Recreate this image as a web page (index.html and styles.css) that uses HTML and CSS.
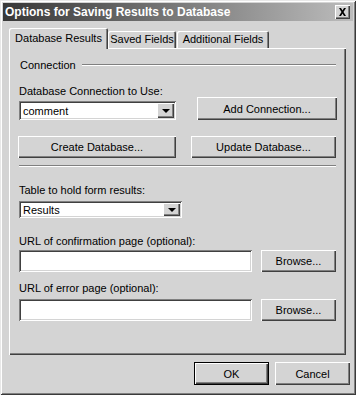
FILE: index.html
```html
<!DOCTYPE html>
<html lang="en">
<head>
  <meta charset="UTF-8">
  <title>Options for Saving Results to Database</title>
  <meta name="viewport" content="width=device-width, initial-scale=1.0">
  <link rel="stylesheet" href="styles.css">
</head>
<body>
  <div class="window">
    <div class="titlebar">
      <span class="title">Options for Saving Results to Database</span>
      <span class="close">
        <svg width="9" height="8" viewBox="0 0 9 8">
          <path d="M1 0h2l1.5 2.5L6 0h2L5.5 4 8 8H6L4.5 5.5 3 8H1l2.5-4z" fill="#000"/>
        </svg>
      </span>
    </div>

    <div class="tabs">
      <div class="tab active">Database Results</div>
      <div class="tab tab-saved">Saved Fields</div>
      <div class="tab tab-extra">Additional Fields</div>
    </div>

    <div class="panel">
      <div class="group-head">
        <span>Connection</span>
        <span class="rule"></span>
      </div>

      <div class="label l-conn">Database Connection to Use:</div>
      <div class="row row-conn">
        <div class="combo combo-conn">
          <span class="value">comment</span>
          <span class="drop"><i></i></span>
        </div>
        <button class="btn btn-add">Add Connection...</button>
      </div>

      <div class="row row-db">
        <button class="btn btn-create">Create Database...</button>
        <button class="btn btn-update">Update Database...</button>
      </div>

      <div class="separator"></div>

      <div class="label l-table">Table to hold form results:</div>
      <div class="combo combo-table">
        <span class="value">Results</span>
        <span class="drop"><i></i></span>
      </div>

      <div class="label l-url">URL of confirmation page (optional):</div>
      <div class="row row-url">
        <div class="field"></div>
        <button class="btn btn-browse">Browse...</button>
      </div>

      <div class="label l-err">URL of error page (optional):</div>
      <div class="row row-err">
        <div class="field"></div>
        <button class="btn btn-browse">Browse...</button>
      </div>
    </div>

    <div class="footer">
      <button class="btn btn-default">OK</button>
      <button class="btn">Cancel</button>
    </div>
  </div>
</body>
</html>
```

FILE: styles.css
```css
* {
  box-sizing: border-box;
}
html, body {
  margin: 0;
  padding: 0;
}
body {
  width: 356px;
  height: 395px;
  background: #d4d4d4;
  font-family: 'Liberation Sans', Arial, sans-serif;
  font-size: 11px;
  color: #000;
}
.window {
  width: 356px;
  height: 395px;
  padding: 3px;
  background: #d4d4d4;
  box-shadow: inset 1px 1px #e8e8e8, inset -1px -1px #3a3a3a, inset 2px 2px #fff, inset -2px -2px #808080;
}
.titlebar {
  height: 18px;
  display: flex;
  align-items: center;
  justify-content: space-between;
  padding: 0 3px 0 2px;
  background: linear-gradient(to right, #383838, #bcbcbc);
}
.title {
  color: #fff;
  font-weight: bold;
  font-size: 12px;
}
.close {
  width: 15px;
  height: 14px;
  margin-top: -1px;
  display: flex;
  align-items: center;
  justify-content: center;
  background: #d4d4d4;
  box-shadow: inset 1px 1px #fff, inset -1px -1px #404040, inset -2px -2px #808080;
}
.tabs {
  display: flex;
  align-items: flex-end;
  height: 20px;
  margin: 7px 0 0 6px;
  position: relative;
  z-index: 1;
}
.tab {
  height: 17px;
  padding-top: 2px;
  text-align: center;
  background: #d4d4d4;
  border-radius: 2px 2px 0 0;
  box-shadow: inset 1px 1px #fff, inset -1px 0 #404040, inset -2px 0 #808080;
}
.tab.active {
  width: 99px;
  height: 21px;
  margin-bottom: -1px;
  padding-top: 4px;
}
.tab-saved {
  width: 68px;
}
.tab-extra {
  width: 92px;
  margin-left: 1px;
}
.panel {
  width: 337px;
  height: 307px;
  margin-left: 6px;
  padding: 1px 10px 0 10px;
  display: flex;
  flex-direction: column;
  box-shadow: inset 1px 1px #fff, inset -1px -1px #404040, inset -2px -2px #808080;
}
.group-head {
  display: flex;
  align-items: center;
  gap: 6px;
  height: 14px;
  margin-top: 9px;
  padding-left: 1px;
}
.rule {
  flex: 1;
  height: 2px;
  border-top: 1px solid #808080;
  border-bottom: 1px solid #fff;
}
.label {
  height: 14px;
  line-height: 14px;
}
.l-conn {
  margin-top: 12px;
}
.l-table {
  margin-top: 16px;
}
.l-url {
  margin-top: 16px;
}
.l-err {
  margin-top: 9px;
}
.row {
  display: flex;
  align-items: flex-end;
  justify-content: space-between;
}
.row-conn {
  height: 23px;
  margin-top: -1px;
}
.row-db {
  height: 22px;
  margin-top: 16px;
}
.row-url {
  height: 22px;
  margin-top: 2px;
}
.row-err {
  height: 22px;
  margin-top: 4px;
}
.separator {
  height: 2px;
  margin-top: 7px;
  border-top: 1px solid #808080;
  border-bottom: 1px solid #fff;
}
.combo, .field {
  background: #fff;
  box-shadow: inset 1px 1px #808080, inset -1px -1px #fff, inset 2px 2px #404040, inset -2px -2px #d4d4d4;
}
.combo {
  display: flex;
  align-items: center;
  justify-content: space-between;
  padding: 2px;
}
.combo .value {
  padding-left: 2px;
}
.combo-conn {
  width: 157px;
  height: 19px;
}
.combo-table {
  width: 163px;
  height: 17px;
  margin-top: 4px;
}
.drop {
  width: 17px;
  height: 100%;
  display: flex;
  align-items: center;
  justify-content: center;
  background: #d4d4d4;
  box-shadow: inset 1px 1px #fff, inset -1px -1px #404040, inset -2px -2px #808080;
}
.drop i {
  width: 0;
  height: 0;
  border-left: 4px solid transparent;
  border-right: 4px solid transparent;
  border-top: 4px solid #000;
}
.field {
  width: 233px;
  height: 22px;
}
.btn {
  font: inherit;
  color: #000;
  height: 23px;
  width: 75px;
  padding: 0;
  border: none;
  background: #d4d4d4;
  box-shadow: inset 1px 1px #fff, inset -1px -1px #404040, inset -2px -2px #808080;
}
.btn-add {
  width: 140px;
  margin-right: -1px;
}
.btn-create {
  width: 158px;
  height: 22px;
  margin-left: -1px;
}
.btn-update {
  width: 145px;
  height: 22px;
}
.btn-browse {
  width: 75px;
  height: 22px;
}
.btn-default {
  box-shadow: inset 1px 1px #000, inset -1px -1px #000, inset 2px 2px #fff, inset -2px -2px #404040, inset -3px -3px #808080;
}
.footer {
  display: flex;
  justify-content: flex-end;
  gap: 6px;
  margin-top: 7px;
  padding-right: 3px;
}
```
